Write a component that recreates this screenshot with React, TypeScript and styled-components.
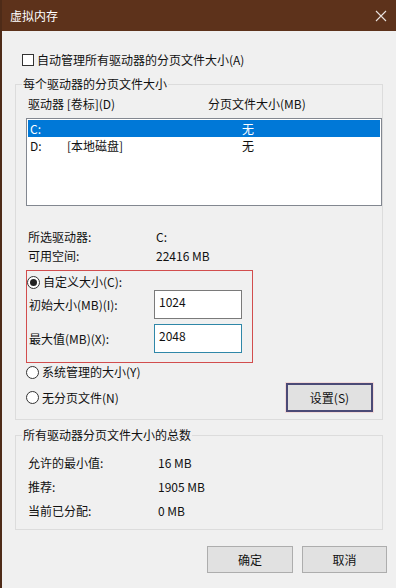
import React from "react";
import styled, { createGlobalStyle } from "styled-components";

const GlobalStyle = createGlobalStyle`
  * { box-sizing: border-box; }
  body {
    margin: 0;
    background: #f0f0f0;
  }
`;

const drives = [
  { letter: "C:", label: "", size: "无", selected: true },
  { letter: "D:", label: "[本地磁盘]", size: "无", selected: false },
];

const totals = [
  { label: "允许的最小值:", value: "16 MB" },
  { label: "推荐:", value: "1905 MB" },
  { label: "当前已分配:", value: "0 MB" },
];

const Radio = ({ checked, children }: { checked?: boolean; children: React.ReactNode }) => (
  <RadioRow>
    <RadioDot $checked={checked} />
    <span>{children}</span>
  </RadioRow>
);

const App = () => {
  return (
    <>
      <GlobalStyle />
      <Window>
        <TitleBar>
          <Title>虚拟内存</Title>
          <svg width="12" height="12" viewBox="0 0 12 12">
            <path d="M1 1 L11 11 M11 1 L1 11" stroke="#e9e2de" strokeWidth="1.1" fill="none" />
          </svg>
        </TitleBar>

        <Body>
          <CheckRow>
            <CheckBox />
            <span>自动管理所有驱动器的分页文件大小(A)</span>
          </CheckRow>

          <Group $mt={8}>
            <Legend>每个驱动器的分页文件大小</Legend>
            <GroupInner $pb={7}>
              <ListHeader>
                <span>驱动器 [卷标](D)</span>
                <span>分页文件大小(MB)</span>
              </ListHeader>
              <ListBox>
                {drives.map((d) => (
                  <DriveRow key={d.letter} $selected={d.selected}>
                    <span>{d.letter}</span>
                    <span>{d.label}</span>
                    <span>{d.size}</span>
                  </DriveRow>
                ))}
              </ListBox>

              <InfoGrid>
                <span>所选驱动器:</span>
                <span>C:</span>
                <span>可用空间:</span>
                <span>22416 MB</span>
              </InfoGrid>

              <CustomBox>
                <Radio checked>自定义大小(C):</Radio>
                <SizeGrid>
                  <FieldLabel>初始大小(MB)(I):</FieldLabel>
                  <SizeInput defaultValue="1024" />
                  <FieldLabel>最大值(MB)(X):</FieldLabel>
                  <SizeInput defaultValue="2048" $focused />
                </SizeGrid>
              </CustomBox>

              <OptionRow>
                <Radio>系统管理的大小(Y)</Radio>
              </OptionRow>
              <SetRow>
                <Radio>无分页文件(N)</Radio>
                <SetButton>设置(S)</SetButton>
              </SetRow>
            </GroupInner>
          </Group>

          <Group $mt={7}>
            <Legend>所有驱动器分页文件大小的总数</Legend>
            <GroupInner $pb={6}>
              <TotalsGrid>
                {totals.map((t) => (
                  <React.Fragment key={t.label}>
                    <span>{t.label}</span>
                    <span>{t.value}</span>
                  </React.Fragment>
                ))}
              </TotalsGrid>
            </GroupInner>
          </Group>

          <ButtonRow>
            <DialogButton $width={86}>确定</DialogButton>
            <DialogButton $width={85}>取消</DialogButton>
          </ButtonRow>
        </Body>
      </Window>
    </>
  );
};

export default App;

const Window = styled.div`
  width: 396px;
  height: 588px;
  overflow: hidden;
  background: #f0f0f0;
  border-left: 2px solid #4e2b18;
  font-family: "Noto Sans CJK SC", "Microsoft YaHei", sans-serif;
  font-size: 12px;
  line-height: 16px;
  color: #111;
`;

const TitleBar = styled.div`
  height: 31px;
  background: #5d321b;
  display: flex;
  align-items: center;
  justify-content: space-between;
  padding: 0 9px 0 8px;
`;

const Title = styled.div`
  color: #fff;
  font-size: 12px;
`;

const Body = styled.div`
  padding: 0 13px;
`;

const CheckRow = styled.div`
  display: flex;
  align-items: center;
  gap: 3px;
  margin-top: 21px;
  padding-left: 7px;
  height: 16px;
`;

const CheckBox = styled.div`
  width: 12px;
  height: 12px;
  border: 1px solid #333;
  background: #fff;
`;

const Group = styled.fieldset<{ $mt: number }>`
  margin: ${({ $mt }) => $mt}px 0 0;
  padding: 0;
  border: 1px solid #dcdcdc;
  min-width: 0;
`;

const Legend = styled.legend`
  margin-left: 6px;
  padding: 0 1px;
  line-height: 16px;
`;

const GroupInner = styled.div<{ $pb: number }>`
  padding: 0 0 ${({ $pb }) => $pb}px 10px;
`;

const ListHeader = styled.div`
  display: grid;
  grid-template-columns: 180px 1fr;
  margin-top: 4px;
  padding-left: 2px;
`;

const ListBox = styled.div`
  margin-top: 6px;
  height: 88px;
  border: 1px solid #828790;
  background: #fff;
  padding: 1px;
`;

const DriveRow = styled.div<{ $selected?: boolean }>`
  display: grid;
  grid-template-columns: 37px 175px 1fr;
  height: 17px;
  align-items: center;
  padding-left: 2px;
  background: ${({ $selected }) => ($selected ? "#0078d7" : "transparent")};
  color: ${({ $selected }) => ($selected ? "#fff" : "#111")};
`;

const InfoGrid = styled.div`
  display: grid;
  grid-template-columns: 128px 1fr;
  grid-auto-rows: 19px;
  align-items: center;
  margin-top: 21px;
  padding-left: 2px;
`;

const CustomBox = styled.div`
  width: 227px;
  margin-top: 5px;
  border: 1px solid #d24d4d;
  padding: 3px 0 9px 0;
`;

const RadioRow = styled.div`
  display: flex;
  align-items: center;
  gap: 3px;
  height: 16px;
`;

const RadioDot = styled.div<{ $checked?: boolean }>`
  width: 13px;
  height: 13px;
  border-radius: 50%;
  border: 1px solid #333;
  background: #fff;
  display: flex;
  align-items: center;
  justify-content: center;
  &::after {
    content: "";
    width: 7px;
    height: 7px;
    border-radius: 50%;
    background: ${({ $checked }) => ($checked ? "#222" : "transparent")};
  }
`;

const SizeGrid = styled.div`
  display: grid;
  grid-template-columns: 125px 88px;
  grid-auto-rows: 29px;
  row-gap: 5px;
  align-items: center;
  padding-left: 2px;
`;

const FieldLabel = styled.span`
  padding-top: 1px;
`;

const SizeInput = styled.input<{ $focused?: boolean }>`
  width: 88px;
  height: 29px;
  border: 1px solid ${({ $focused }) => ($focused ? "#2f87a8" : "#7a7a7a")};
  background: #fff;
  padding: 1px 4px 8px;
  font-family: inherit;
  font-size: 12px;
  color: #111;
  outline: none;
`;

const OptionRow = styled.div`
  margin-top: 1px;
`;

const SetRow = styled.div`
  display: flex;
  align-items: center;
  justify-content: space-between;
  margin-top: 3px;
  padding-right: 9px;
`;

const SetButton = styled.div`
  width: 87px;
  height: 29px;
  display: flex;
  align-items: center;
  justify-content: center;
  background: #e1e1e1;
  border: 2px solid #4b4a76;
  box-shadow: 0 0 0 1px #f1d9d9;
`;

const TotalsGrid = styled.div`
  display: grid;
  grid-template-columns: 130px 1fr;
  grid-auto-rows: 24px;
  align-items: center;
  margin-top: 8px;
  padding-left: 2px;
`;

const ButtonRow = styled.div`
  display: flex;
  justify-content: flex-end;
  gap: 9px;
  margin: 16px -4px 0 0;
`;

const DialogButton = styled.div<{ $width: number }>`
  width: ${({ $width }) => $width}px;
  height: 27px;
  display: flex;
  align-items: center;
  justify-content: center;
  background: #e1e1e1;
  border: 1px solid #adadad;
`;
